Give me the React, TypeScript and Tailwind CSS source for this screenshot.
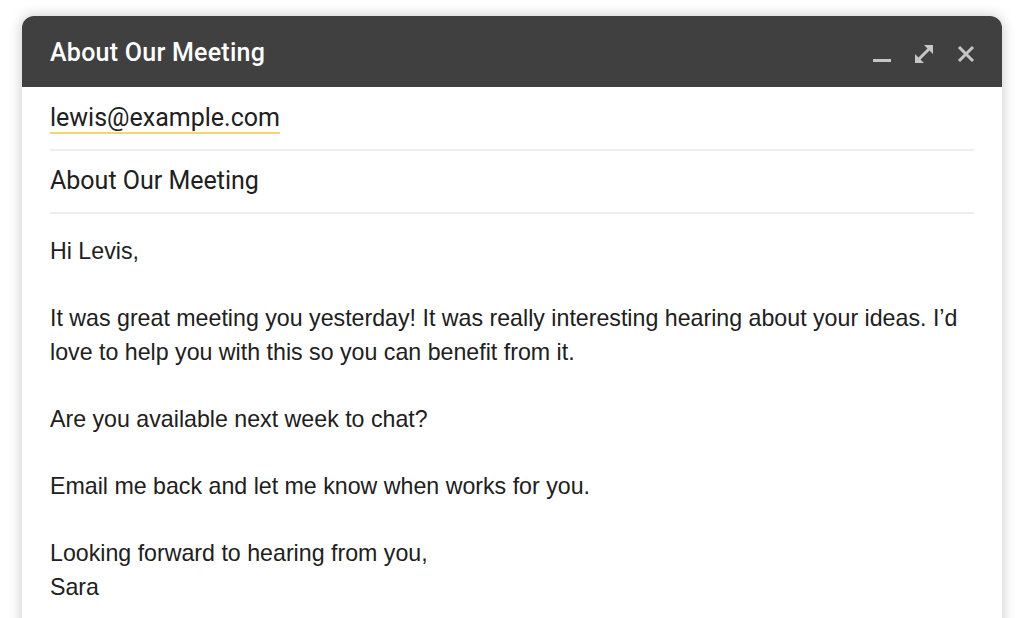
import React from 'react'

const roboto = { fontFamily: 'Roboto, "Liberation Sans", sans-serif' }

const MinimizeIcon = () => (
    <svg width="20" height="20" viewBox="0 0 20 20" className="block">
        <rect x="1" y="15" width="18" height="3" fill="#c6c6c6" />
    </svg>
)

const ExpandIcon = () => (
    <svg width="20" height="20" viewBox="0 0 20 20" className="block">
        <path d="M5 15L15 5" stroke="#c6c6c6" strokeWidth="3" />
        <path d="M10 1h9v9z M1 10v9h9z" fill="#c6c6c6" />
    </svg>
)

const CloseIcon = () => (
    <svg width="20" height="20" viewBox="0 0 20 20" className="block">
        <path d="M3 3l14 14M17 3L3 17" stroke="#c6c6c6" strokeWidth="3" />
    </svg>
)

const paragraphs = [
    ['Hi Levis,'],
    ['It was great meeting you yesterday! It was really interesting hearing about your ideas. I\u2019d love to help you with this so you can benefit from it.'],
    ['Are you available next week to chat?'],
    ['Email me back and let me know when works for you.'],
    ['Looking forward to hearing from you,', 'Sara'],
]

const App: React.FC = () => {
    return (
        <div className="w-[1024px] h-[618px] bg-white overflow-hidden pt-4 pl-[22px]">
            <div className="w-[980px] h-[640px] bg-white rounded-t-xl shadow-[0_0_14px_rgba(0,0,0,0.22)] flex flex-col">
                <div className="h-[71px] bg-[#404040] rounded-t-xl flex items-center pl-7 pr-[26px]">
                    <h1 className="flex-1 text-white text-[25px] font-medium tracking-[0.25px] pt-[2px]" style={roboto}>
                        About Our Meeting
                    </h1>
                    <div className="flex items-center gap-[22px] pt-[5px]">
                        <MinimizeIcon />
                        <ExpandIcon />
                        <CloseIcon />
                    </div>
                </div>
                <div className="px-7 flex flex-col">
                    <div className="h-[64px] flex items-center border-b-2 border-[#eeeeee]">
                        <span className="text-[25px] text-[#202020] leading-[28px] border-b-2 border-[#f5d36d] pt-[2px]" style={roboto}>
                            lewis@example.com
                        </span>
                    </div>
                    <div className="h-[63px] flex items-center border-b-2 border-[#eeeeee]">
                        <span className="text-[25px] text-[#202020] pb-[2px]" style={roboto}>
                            About Our Meeting
                        </span>
                    </div>
                    <div className="pt-[21px] flex flex-col gap-[33.6px] text-[23.2px] leading-[33.6px] text-[#202020]"
                        style={{ fontFamily: '"Liberation Sans", Arial, sans-serif' }}>
                        {paragraphs.map((p, i) => (
                            <p key={i}>
                                {p.map((line, j) => (
                                    <span key={j} className="block">{line}</span>
                                ))}
                            </p>
                        ))}
                    </div>
                </div>
            </div>
        </div>
    )
}

export default App
